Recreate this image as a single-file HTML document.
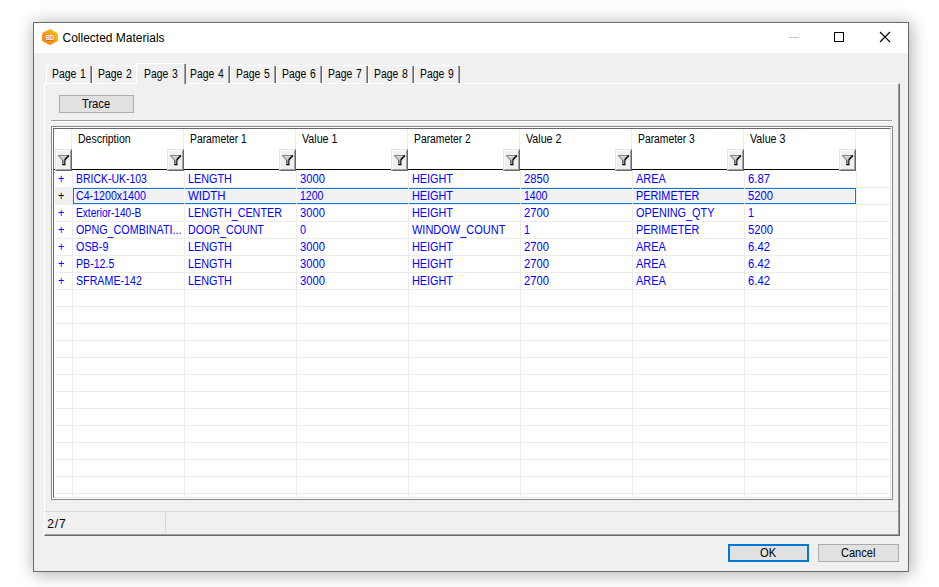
<!DOCTYPE html><html><head><meta charset="utf-8"><title>Collected Materials</title><style>
*{box-sizing:border-box;margin:0;padding:0}
html,body{width:939px;height:587px;overflow:hidden;background:#fff}
body{font-family:"Liberation Sans",sans-serif;position:relative;color:#000}
.abs{position:absolute}
#win{position:absolute;left:33px;top:22px;width:876px;height:550px;background:#f0f0f0;border:1px solid #6a6a6a;box-shadow:1.5px 1.5px 16px 0.5px rgba(0,0,0,.33)}
#title{position:absolute;left:34px;top:23px;width:874px;height:30px;background:#fff}
#ttext{position:absolute;left:62.5px;top:31px;font-size:12px;line-height:15px;white-space:nowrap}
.tabt{position:absolute;font-size:12px;line-height:15px;white-space:nowrap;transform-origin:0 0;transform:scaleX(.867);word-spacing:0.8px}
.g{font-size:12px;line-height:15px;white-space:nowrap;position:absolute;transform-origin:0 0}
.b{color:#0000ff}
.fb{position:absolute;width:17px;height:22px;top:149px;background:#f0f0f0;border-top:1px solid #e3e3e3;border-left:1px solid #e3e3e3;border-right:1px solid #696969;border-bottom:1px solid #696969}
.fb:after{content:"";position:absolute;left:0;top:0;right:0;bottom:0;border-top:1px solid #fff;border-left:1px solid #fff;border-right:1px solid #a0a0a0;border-bottom:1px solid #a0a0a0}
.fb svg{position:absolute;left:2px;top:5px}
.vl{position:absolute;width:1px;background:#ececec}
.hl{position:absolute;height:1px;background:#ececec;left:55px;width:835px}
.btn{position:absolute;background:#e1e1e1;border:1px solid #adadad;text-align:center}
.bt{position:absolute;font-size:12px;line-height:15px;white-space:nowrap;transform-origin:0 0}
</style></head><body>
<div id="win"></div><div id="title"></div>
<svg class="abs" style="left:38px;top:26px" width="24" height="24" viewBox="38 26 24 24"><defs><linearGradient id="ig" x1="0" y1="1" x2="1" y2="0"><stop offset="0" stop-color="#f27c12"/><stop offset="0.5" stop-color="#f99a18"/><stop offset="1" stop-color="#ffc80e"/></linearGradient></defs><path d="M50 29.4 L57.4 33.4 L57.4 40.7 L50 44.7 L42.6 40.7 L42.6 33.4 Z" fill="url(#ig)" stroke="url(#ig)" stroke-width="0.9" stroke-linejoin="round"/><g transform="translate(45.9 40.1) scale(0.8 1)"><text x="0" y="0.5" font-family="Liberation Sans" font-weight="bold" font-size="7" fill="#a85000" fill-opacity="0.55">BD</text><text x="0" y="0" font-family="Liberation Sans" font-weight="bold" font-size="7" fill="#fff">BD</text></g></svg>
<div id="ttext">Collected Materials</div>
<div class="abs" style="left:789px;top:37px;width:10px;height:1px;background:#c8c8c8"></div>
<div class="abs" style="left:834px;top:32px;width:10px;height:10px;border:1px solid #000"></div>
<svg class="abs" style="left:878px;top:30px" width="14" height="14" viewBox="878 30 14 14"><path d="M880 32 L890 42 M890 32 L880 42" stroke="#000" stroke-width="1.15" fill="none"/></svg>
<div class="abs" style="left:44px;top:83px;width:856px;height:453px;border-left:1px solid #fff;border-top:1px solid #fff;border-right:1px solid #696969;border-bottom:1px solid #696969"></div>
<div class="abs" style="left:45px;top:84px;width:854px;height:451px;border-right:1px solid #a0a0a0;border-bottom:1px solid #a0a0a0"></div>
<div class="abs" style="left:46px;top:65px;width:44px;height:18px;border-top:1px solid #fff;border-left:1px solid #fff;border-top-left-radius:2px"></div>
<div class="abs" style="left:90px;top:66px;width:1px;height:17px;background:#a0a0a0"></div>
<div class="abs" style="left:91px;top:66px;width:1px;height:17px;background:#696969"></div>
<div class="tabt" style="left:51.6px;top:67px">Page 1</div>
<div class="abs" style="left:92px;top:65px;width:44px;height:18px;border-top:1px solid #fff;border-left:1px solid #fff;border-top-left-radius:2px"></div>
<div class="abs" style="left:136px;top:66px;width:1px;height:17px;background:#a0a0a0"></div>
<div class="abs" style="left:137px;top:66px;width:1px;height:17px;background:#696969"></div>
<div class="tabt" style="left:97.6px;top:67px">Page 2</div>
<div class="abs" style="left:184px;top:65px;width:44px;height:18px;border-top:1px solid #fff;border-left:1px solid #fff;border-top-left-radius:2px"></div>
<div class="abs" style="left:228px;top:66px;width:1px;height:17px;background:#a0a0a0"></div>
<div class="abs" style="left:229px;top:66px;width:1px;height:17px;background:#696969"></div>
<div class="tabt" style="left:189.6px;top:67px">Page 4</div>
<div class="abs" style="left:230px;top:65px;width:44px;height:18px;border-top:1px solid #fff;border-left:1px solid #fff;border-top-left-radius:2px"></div>
<div class="abs" style="left:274px;top:66px;width:1px;height:17px;background:#a0a0a0"></div>
<div class="abs" style="left:275px;top:66px;width:1px;height:17px;background:#696969"></div>
<div class="tabt" style="left:235.6px;top:67px">Page 5</div>
<div class="abs" style="left:276px;top:65px;width:44px;height:18px;border-top:1px solid #fff;border-left:1px solid #fff;border-top-left-radius:2px"></div>
<div class="abs" style="left:320px;top:66px;width:1px;height:17px;background:#a0a0a0"></div>
<div class="abs" style="left:321px;top:66px;width:1px;height:17px;background:#696969"></div>
<div class="tabt" style="left:281.6px;top:67px">Page 6</div>
<div class="abs" style="left:322px;top:65px;width:44px;height:18px;border-top:1px solid #fff;border-left:1px solid #fff;border-top-left-radius:2px"></div>
<div class="abs" style="left:366px;top:66px;width:1px;height:17px;background:#a0a0a0"></div>
<div class="abs" style="left:367px;top:66px;width:1px;height:17px;background:#696969"></div>
<div class="tabt" style="left:327.6px;top:67px">Page 7</div>
<div class="abs" style="left:368px;top:65px;width:44px;height:18px;border-top:1px solid #fff;border-left:1px solid #fff;border-top-left-radius:2px"></div>
<div class="abs" style="left:412px;top:66px;width:1px;height:17px;background:#a0a0a0"></div>
<div class="abs" style="left:413px;top:66px;width:1px;height:17px;background:#696969"></div>
<div class="tabt" style="left:373.6px;top:67px">Page 8</div>
<div class="abs" style="left:414px;top:65px;width:44px;height:18px;border-top:1px solid #fff;border-left:1px solid #fff;border-top-left-radius:2px"></div>
<div class="abs" style="left:458px;top:66px;width:1px;height:17px;background:#a0a0a0"></div>
<div class="abs" style="left:459px;top:66px;width:1px;height:17px;background:#696969"></div>
<div class="tabt" style="left:419.6px;top:67px">Page 9</div>
<div class="abs" style="left:136px;top:63px;width:50px;height:21px;background:#f0f0f0"></div>
<div class="abs" style="left:136px;top:63px;width:48px;height:21px;border-top:1px solid #fff;border-left:1px solid #fff;border-top-left-radius:2px"></div>
<div class="abs" style="left:184px;top:64px;width:1px;height:20px;background:#a0a0a0"></div>
<div class="abs" style="left:185px;top:64px;width:1px;height:20px;background:#696969"></div>
<div class="tabt" style="left:143.8px;top:67px">Page 3</div>
<div class="btn" style="left:59px;top:95px;width:75px;height:18px"></div>
<div class="tabt" style="left:81.9px;top:97px;transform:scaleX(.93)">Trace</div>
<div class="abs" style="left:51px;top:120px;width:841px;height:1px;background:#a0a0a0"></div>
<div class="abs" style="left:51px;top:121px;width:841px;height:1px;background:#fff"></div>
<div class="abs" style="left:51px;top:126px;width:842px;height:374px;border:1px solid #828790;background:#fff"></div>
<div class="abs" style="left:53px;top:128px;width:838px;height:370px;border-left:1px solid #696969;border-top:1px solid #696969;border-right:1px solid #e3e3e3;border-bottom:1px solid #e3e3e3;background:#fff"></div>
<div class="hl" style="top:187px"></div>
<div class="hl" style="top:204px"></div>
<div class="hl" style="top:221px"></div>
<div class="hl" style="top:238px"></div>
<div class="hl" style="top:255px"></div>
<div class="hl" style="top:272px"></div>
<div class="hl" style="top:289px"></div>
<div class="hl" style="top:306px"></div>
<div class="hl" style="top:323px"></div>
<div class="hl" style="top:340px"></div>
<div class="hl" style="top:357px"></div>
<div class="hl" style="top:374px"></div>
<div class="hl" style="top:391px"></div>
<div class="hl" style="top:408px"></div>
<div class="hl" style="top:425px"></div>
<div class="hl" style="top:442px"></div>
<div class="hl" style="top:459px"></div>
<div class="hl" style="top:476px"></div>
<div class="hl" style="top:493px"></div>
<div class="vl" style="left:71px;top:129px;height:40px"></div>
<div class="vl" style="left:72px;top:170px;height:327px"></div>
<div class="vl" style="left:183px;top:129px;height:40px"></div>
<div class="vl" style="left:184px;top:170px;height:327px"></div>
<div class="vl" style="left:295px;top:129px;height:40px"></div>
<div class="vl" style="left:296px;top:170px;height:327px"></div>
<div class="vl" style="left:407px;top:129px;height:40px"></div>
<div class="vl" style="left:408px;top:170px;height:327px"></div>
<div class="vl" style="left:519px;top:129px;height:40px"></div>
<div class="vl" style="left:520px;top:170px;height:327px"></div>
<div class="vl" style="left:631px;top:129px;height:40px"></div>
<div class="vl" style="left:632px;top:170px;height:327px"></div>
<div class="vl" style="left:743px;top:129px;height:40px"></div>
<div class="vl" style="left:744px;top:170px;height:327px"></div>
<div class="vl" style="left:855px;top:129px;height:40px"></div>
<div class="vl" style="left:856px;top:170px;height:327px"></div>
<div class="abs" style="left:55px;top:187px;width:17px;height:18px;background:#f0f0f0"></div>
<div class="abs" style="left:73px;top:188px;width:783px;height:16px;background:#f0f0f0;border:1px solid #0078d7;box-shadow:inset 0 0 0 1px #fff"></div>
<div class="abs" style="left:184px;top:188px;width:1px;height:16px;background:#fbfbfb"></div>
<div class="abs" style="left:296px;top:188px;width:1px;height:16px;background:#fbfbfb"></div>
<div class="abs" style="left:408px;top:188px;width:1px;height:16px;background:#fbfbfb"></div>
<div class="abs" style="left:520px;top:188px;width:1px;height:16px;background:#fbfbfb"></div>
<div class="abs" style="left:632px;top:188px;width:1px;height:16px;background:#fbfbfb"></div>
<div class="abs" style="left:744px;top:188px;width:1px;height:16px;background:#fbfbfb"></div>
<div class="abs" style="left:54px;top:169px;width:802px;height:1px;background:#000"></div>
<div class="g" style="left:77.6px;top:132.3px;transform:scaleX(0.8758)">Description</div>
<div class="g" style="left:189.6px;top:132.3px;transform:scaleX(0.8611)">Parameter 1</div>
<div class="g" style="left:301.6px;top:132.3px;transform:scaleX(0.8915)">Value 1</div>
<div class="g" style="left:413.6px;top:132.3px;transform:scaleX(0.8611)">Parameter 2</div>
<div class="g" style="left:525.6px;top:132.3px;transform:scaleX(0.8915)">Value 2</div>
<div class="g" style="left:637.6px;top:132.3px;transform:scaleX(0.8611)">Parameter 3</div>
<div class="g" style="left:749.6px;top:132.3px;transform:scaleX(0.8915)">Value 3</div>
<div class="fb" style="left:55px"><svg width="12" height="11" viewBox="0 0 12 11"><path d="M2.2 1.6 H9.6 L6.6 5 H4.9 Z" fill="#bdbdbd" fill-opacity="0.75"/><path d="M0.3 0.5 H11" stroke="#808080" stroke-width="1" fill="none"/><path d="M0.6 0.8 L4.6 5.2" stroke="#555" stroke-width="0.9" fill="none"/><path d="M10.9 0.4 L6.9 4.8" stroke="#000" stroke-width="1.5" fill="none"/><rect x="4.5" y="5" width="2" height="4.5" fill="#9a9a9a"/><path d="M4.5 5 V9.5" stroke="#555" stroke-width="0.8" fill="none"/><path d="M6.9 4.6 V9.6 H4.3" stroke="#000" stroke-width="1.1" fill="none"/></svg></div>
<div class="fb" style="left:167px"><svg width="12" height="11" viewBox="0 0 12 11"><path d="M2.2 1.6 H9.6 L6.6 5 H4.9 Z" fill="#bdbdbd" fill-opacity="0.75"/><path d="M0.3 0.5 H11" stroke="#808080" stroke-width="1" fill="none"/><path d="M0.6 0.8 L4.6 5.2" stroke="#555" stroke-width="0.9" fill="none"/><path d="M10.9 0.4 L6.9 4.8" stroke="#000" stroke-width="1.5" fill="none"/><rect x="4.5" y="5" width="2" height="4.5" fill="#9a9a9a"/><path d="M4.5 5 V9.5" stroke="#555" stroke-width="0.8" fill="none"/><path d="M6.9 4.6 V9.6 H4.3" stroke="#000" stroke-width="1.1" fill="none"/></svg></div>
<div class="fb" style="left:279px"><svg width="12" height="11" viewBox="0 0 12 11"><path d="M2.2 1.6 H9.6 L6.6 5 H4.9 Z" fill="#bdbdbd" fill-opacity="0.75"/><path d="M0.3 0.5 H11" stroke="#808080" stroke-width="1" fill="none"/><path d="M0.6 0.8 L4.6 5.2" stroke="#555" stroke-width="0.9" fill="none"/><path d="M10.9 0.4 L6.9 4.8" stroke="#000" stroke-width="1.5" fill="none"/><rect x="4.5" y="5" width="2" height="4.5" fill="#9a9a9a"/><path d="M4.5 5 V9.5" stroke="#555" stroke-width="0.8" fill="none"/><path d="M6.9 4.6 V9.6 H4.3" stroke="#000" stroke-width="1.1" fill="none"/></svg></div>
<div class="fb" style="left:391px"><svg width="12" height="11" viewBox="0 0 12 11"><path d="M2.2 1.6 H9.6 L6.6 5 H4.9 Z" fill="#bdbdbd" fill-opacity="0.75"/><path d="M0.3 0.5 H11" stroke="#808080" stroke-width="1" fill="none"/><path d="M0.6 0.8 L4.6 5.2" stroke="#555" stroke-width="0.9" fill="none"/><path d="M10.9 0.4 L6.9 4.8" stroke="#000" stroke-width="1.5" fill="none"/><rect x="4.5" y="5" width="2" height="4.5" fill="#9a9a9a"/><path d="M4.5 5 V9.5" stroke="#555" stroke-width="0.8" fill="none"/><path d="M6.9 4.6 V9.6 H4.3" stroke="#000" stroke-width="1.1" fill="none"/></svg></div>
<div class="fb" style="left:503px"><svg width="12" height="11" viewBox="0 0 12 11"><path d="M2.2 1.6 H9.6 L6.6 5 H4.9 Z" fill="#bdbdbd" fill-opacity="0.75"/><path d="M0.3 0.5 H11" stroke="#808080" stroke-width="1" fill="none"/><path d="M0.6 0.8 L4.6 5.2" stroke="#555" stroke-width="0.9" fill="none"/><path d="M10.9 0.4 L6.9 4.8" stroke="#000" stroke-width="1.5" fill="none"/><rect x="4.5" y="5" width="2" height="4.5" fill="#9a9a9a"/><path d="M4.5 5 V9.5" stroke="#555" stroke-width="0.8" fill="none"/><path d="M6.9 4.6 V9.6 H4.3" stroke="#000" stroke-width="1.1" fill="none"/></svg></div>
<div class="fb" style="left:615px"><svg width="12" height="11" viewBox="0 0 12 11"><path d="M2.2 1.6 H9.6 L6.6 5 H4.9 Z" fill="#bdbdbd" fill-opacity="0.75"/><path d="M0.3 0.5 H11" stroke="#808080" stroke-width="1" fill="none"/><path d="M0.6 0.8 L4.6 5.2" stroke="#555" stroke-width="0.9" fill="none"/><path d="M10.9 0.4 L6.9 4.8" stroke="#000" stroke-width="1.5" fill="none"/><rect x="4.5" y="5" width="2" height="4.5" fill="#9a9a9a"/><path d="M4.5 5 V9.5" stroke="#555" stroke-width="0.8" fill="none"/><path d="M6.9 4.6 V9.6 H4.3" stroke="#000" stroke-width="1.1" fill="none"/></svg></div>
<div class="fb" style="left:727px"><svg width="12" height="11" viewBox="0 0 12 11"><path d="M2.2 1.6 H9.6 L6.6 5 H4.9 Z" fill="#bdbdbd" fill-opacity="0.75"/><path d="M0.3 0.5 H11" stroke="#808080" stroke-width="1" fill="none"/><path d="M0.6 0.8 L4.6 5.2" stroke="#555" stroke-width="0.9" fill="none"/><path d="M10.9 0.4 L6.9 4.8" stroke="#000" stroke-width="1.5" fill="none"/><rect x="4.5" y="5" width="2" height="4.5" fill="#9a9a9a"/><path d="M4.5 5 V9.5" stroke="#555" stroke-width="0.8" fill="none"/><path d="M6.9 4.6 V9.6 H4.3" stroke="#000" stroke-width="1.1" fill="none"/></svg></div>
<div class="fb" style="left:839px"><svg width="12" height="11" viewBox="0 0 12 11"><path d="M2.2 1.6 H9.6 L6.6 5 H4.9 Z" fill="#bdbdbd" fill-opacity="0.75"/><path d="M0.3 0.5 H11" stroke="#808080" stroke-width="1" fill="none"/><path d="M0.6 0.8 L4.6 5.2" stroke="#555" stroke-width="0.9" fill="none"/><path d="M10.9 0.4 L6.9 4.8" stroke="#000" stroke-width="1.5" fill="none"/><rect x="4.5" y="5" width="2" height="4.5" fill="#9a9a9a"/><path d="M4.5 5 V9.5" stroke="#555" stroke-width="0.8" fill="none"/><path d="M6.9 4.6 V9.6 H4.3" stroke="#000" stroke-width="1.1" fill="none"/></svg></div>
<div class="g" style="left:57.6px;top:172.3px;color:#00f;transform:scaleX(.9)">+</div>
<div class="g b" style="left:75.6px;top:172.3px;transform:scaleX(0.8711)">BRICK-UK-103</div>
<div class="g b" style="left:187.6px;top:172.3px;transform:scaleX(0.9017)">LENGTH</div>
<div class="g b" style="left:299.7px;top:172.3px;transform:scaleX(0.9337)">3000</div>
<div class="g b" style="left:411.6px;top:172.3px;transform:scaleX(0.902)">HEIGHT</div>
<div class="g b" style="left:523.7px;top:172.3px;transform:scaleX(0.9337)">2850</div>
<div class="g b" style="left:635.6px;top:172.3px;transform:scaleX(0.9152)">AREA</div>
<div class="g b" style="left:747.7px;top:172.3px;transform:scaleX(0.9392)">6.87</div>
<div class="g" style="left:57.6px;top:189.3px;color:#000;transform:scaleX(.9)">+</div>
<div class="g b" style="left:75.6px;top:189.3px;transform:scaleX(0.8876)">C4-1200x1400</div>
<div class="g b" style="left:187.6px;top:189.3px;transform:scaleX(0.9523)">WIDTH</div>
<div class="g b" style="left:299.7px;top:189.3px;transform:scaleX(0.8754)">1200</div>
<div class="g b" style="left:411.6px;top:189.3px;transform:scaleX(0.902)">HEIGHT</div>
<div class="g b" style="left:523.7px;top:189.3px;transform:scaleX(0.8754)">1400</div>
<div class="g b" style="left:635.6px;top:189.3px;transform:scaleX(0.9056)">PERIMETER</div>
<div class="g b" style="left:747.7px;top:189.3px;transform:scaleX(0.9337)">5200</div>
<div class="g" style="left:57.6px;top:206.3px;color:#00f;transform:scaleX(.9)">+</div>
<div class="g b" style="left:75.6px;top:206.3px;transform:scaleX(0.8445)">Exterior-140-B</div>
<div class="g b" style="left:187.6px;top:206.3px;transform:scaleX(0.8969)">LENGTH<span style="position:relative;top:1px">_</span>CENTER</div>
<div class="g b" style="left:299.7px;top:206.3px;transform:scaleX(0.9337)">3000</div>
<div class="g b" style="left:411.6px;top:206.3px;transform:scaleX(0.902)">HEIGHT</div>
<div class="g b" style="left:523.7px;top:206.3px;transform:scaleX(0.9337)">2700</div>
<div class="g b" style="left:635.6px;top:206.3px;transform:scaleX(0.9044)">OPENING<span style="position:relative;top:1px">_</span>QTY</div>
<div class="g b" style="left:747.7px;top:206.3px;transform:scaleX(0.9)">1</div>
<div class="g" style="left:57.6px;top:223.3px;color:#00f;transform:scaleX(.9)">+</div>
<div class="g b" style="left:75.6px;top:223.3px;transform:scaleX(0.8947)">OPNG<span style="position:relative;top:1px">_</span>COMBINATI...</div>
<div class="g b" style="left:187.6px;top:223.3px;transform:scaleX(0.8892)">DOOR<span style="position:relative;top:1px">_</span>COUNT</div>
<div class="g b" style="left:299.7px;top:223.3px;transform:scaleX(0.9)">0</div>
<div class="g b" style="left:411.6px;top:223.3px;transform:scaleX(0.9158)">WINDOW<span style="position:relative;top:1px">_</span>COUNT</div>
<div class="g b" style="left:523.7px;top:223.3px;transform:scaleX(0.9)">1</div>
<div class="g b" style="left:635.6px;top:223.3px;transform:scaleX(0.9056)">PERIMETER</div>
<div class="g b" style="left:747.7px;top:223.3px;transform:scaleX(0.9337)">5200</div>
<div class="g" style="left:57.6px;top:240.3px;color:#00f;transform:scaleX(.9)">+</div>
<div class="g b" style="left:75.6px;top:240.3px;transform:scaleX(0.8996)">OSB-9</div>
<div class="g b" style="left:187.6px;top:240.3px;transform:scaleX(0.9017)">LENGTH</div>
<div class="g b" style="left:299.7px;top:240.3px;transform:scaleX(0.9337)">3000</div>
<div class="g b" style="left:411.6px;top:240.3px;transform:scaleX(0.902)">HEIGHT</div>
<div class="g b" style="left:523.7px;top:240.3px;transform:scaleX(0.9337)">2700</div>
<div class="g b" style="left:635.6px;top:240.3px;transform:scaleX(0.9152)">AREA</div>
<div class="g b" style="left:747.7px;top:240.3px;transform:scaleX(0.9392)">6.42</div>
<div class="g" style="left:57.6px;top:257.3px;color:#00f;transform:scaleX(.9)">+</div>
<div class="g b" style="left:75.6px;top:257.3px;transform:scaleX(0.8853)">PB-12.5</div>
<div class="g b" style="left:187.6px;top:257.3px;transform:scaleX(0.9017)">LENGTH</div>
<div class="g b" style="left:299.7px;top:257.3px;transform:scaleX(0.9337)">3000</div>
<div class="g b" style="left:411.6px;top:257.3px;transform:scaleX(0.902)">HEIGHT</div>
<div class="g b" style="left:523.7px;top:257.3px;transform:scaleX(0.9337)">2700</div>
<div class="g b" style="left:635.6px;top:257.3px;transform:scaleX(0.9152)">AREA</div>
<div class="g b" style="left:747.7px;top:257.3px;transform:scaleX(0.9392)">6.42</div>
<div class="g" style="left:57.6px;top:274.3px;color:#00f;transform:scaleX(.9)">+</div>
<div class="g b" style="left:75.6px;top:274.3px;transform:scaleX(0.89)">SFRAME-142</div>
<div class="g b" style="left:187.6px;top:274.3px;transform:scaleX(0.9017)">LENGTH</div>
<div class="g b" style="left:299.7px;top:274.3px;transform:scaleX(0.9337)">3000</div>
<div class="g b" style="left:411.6px;top:274.3px;transform:scaleX(0.902)">HEIGHT</div>
<div class="g b" style="left:523.7px;top:274.3px;transform:scaleX(0.9337)">2700</div>
<div class="g b" style="left:635.6px;top:274.3px;transform:scaleX(0.9152)">AREA</div>
<div class="g b" style="left:747.7px;top:274.3px;transform:scaleX(0.9392)">6.42</div>
<div class="abs" style="left:45px;top:511px;width:853px;height:1px;background:#dadada"></div>
<div class="abs" style="left:165px;top:513px;width:1px;height:20px;background:#d7d7d7"></div>
<div class="abs" style="left:47.3px;top:517px;font-size:12px;line-height:15px;letter-spacing:0.8px">2/7</div>
<div class="btn" style="left:728px;top:544px;width:81px;height:18px;border:2px solid #0078d7"></div>
<div class="bt" style="left:759.6px;top:546.3px;transform:scaleX(.93)">OK</div>
<div class="btn" style="left:818px;top:544px;width:81px;height:18px"></div>
<div class="bt" style="left:840.6px;top:546.3px;transform:scaleX(.92)">Cancel</div>
</body></html>
